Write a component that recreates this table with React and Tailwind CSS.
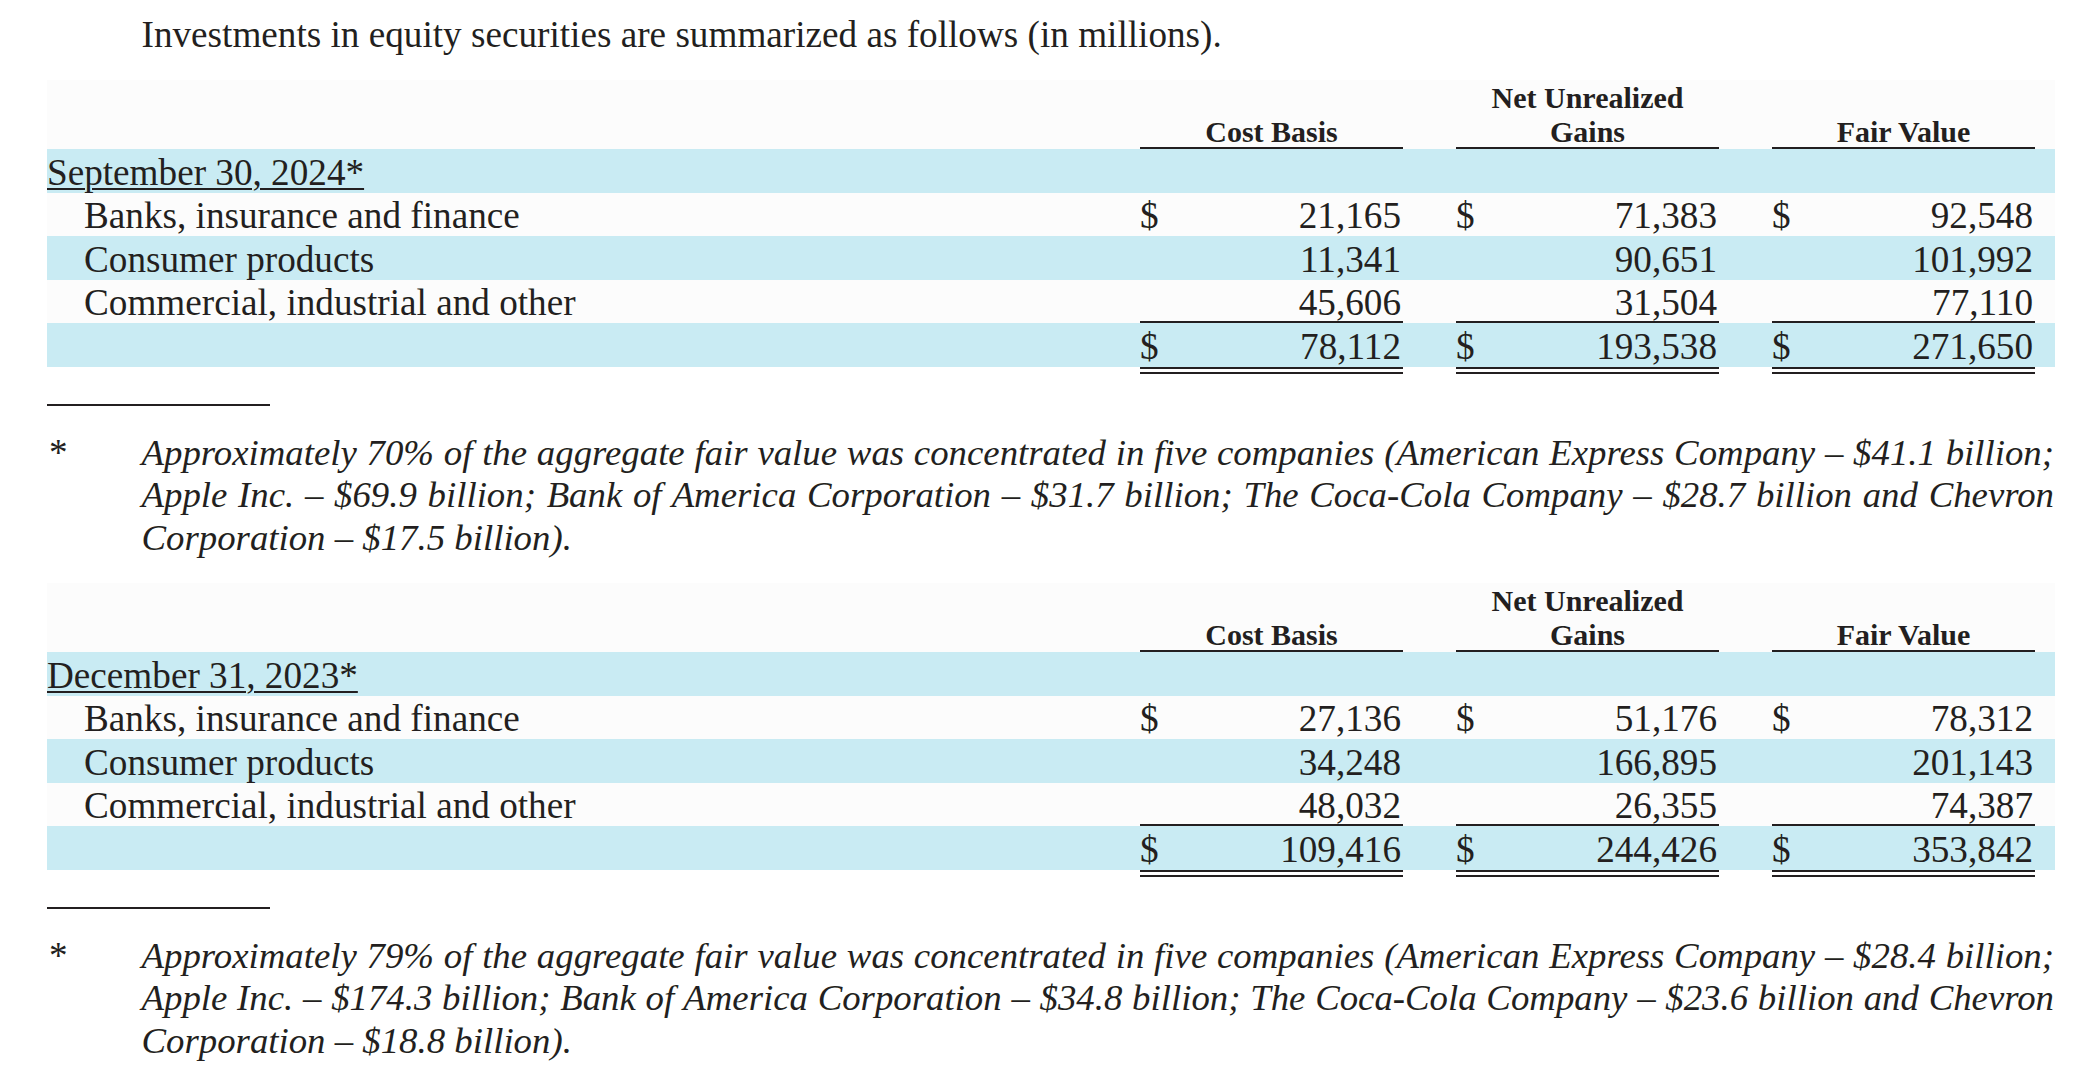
const ink = 'text-[#231f20]'

const sections = [
  {
    date: 'September 30, 2024*',
    rows: [
      ['Banks, insurance and finance', '21,165', '71,383', '92,548'],
      ['Consumer products', '11,341', '90,651', '101,992'],
      ['Commercial, industrial and other', '45,606', '31,504', '77,110'],
    ],
    total: ['78,112', '193,538', '271,650'],
    note: [
      'Approximately 70% of the aggregate fair value was concentrated in five companies (American Express Company – $41.1 billion;',
      'Apple Inc. – $69.9 billion; Bank of America Corporation – $31.7 billion; The Coca-Cola Company – $28.7 billion and Chevron',
      'Corporation – $17.5 billion).',
    ],
  },
  {
    date: 'December 31, 2023*',
    rows: [
      ['Banks, insurance and finance', '27,136', '51,176', '78,312'],
      ['Consumer products', '34,248', '166,895', '201,143'],
      ['Commercial, industrial and other', '48,032', '26,355', '74,387'],
    ],
    total: ['109,416', '244,426', '353,842'],
    note: [
      'Approximately 79% of the aggregate fair value was concentrated in five companies (American Express Company – $28.4 billion;',
      'Apple Inc. – $174.3 billion; Bank of America Corporation – $34.8 billion; The Coca-Cola Company – $23.6 billion and Chevron',
      'Corporation – $18.8 billion).',
    ],
  },
]

const headers = [['Cost Basis'], ['Net Unrealized', 'Gains'], ['Fair Value']]

function HeaderRow() {
  return (
    <div className="flex h-[69.3px] items-end pr-[20px]">
      <div className="flex-1" />
      {headers.map((lines, i) => (
        <div
          key={i}
          className={`w-[263px] border-b-2 border-[#231f20] ${i > 0 ? 'ml-[53px]' : ''}`}
        >
          <div className="mb-[-2.5px] text-center text-[30px] font-bold leading-[34.5px]">
            {lines.map((l) => (
              <div key={l}>{l}</div>
            ))}
          </div>
        </div>
      ))}
    </div>
  )
}

function Row({ label, values, band, dollars, indent, title, rule }) {
  return (
    <div className={`flex h-[43.5px] pr-[20px] pt-[2.5px] leading-[41px] ${band ? 'bg-[#c9ebf3]' : ''}`}>
      <div className={`flex-1 ${indent ? 'pl-[37px]' : ''}`}>
        {title ? (
          <span className="underline decoration-2 underline-offset-[3px]">{label}</span>
        ) : (
          label
        )}
      </div>
      {values.map((v, i) => (
        <div
          key={i}
          className={`flex w-[263px] justify-between ${i > 0 ? 'ml-[53px]' : ''} ${rule ? 'border-b-2 border-[#231f20]' : ''}`}
        >
          <span>{dollars ? '$' : ''}</span>
          <span className="pr-[2px]">{v}</span>
        </div>
      ))}
    </div>
  )
}

function Section({ data }) {
  return (
    <div>
      <div className="ml-[47px] w-[2008px] bg-[#fcfcfc]">
        <HeaderRow />
        <Row label={data.date} values={['', '', '']} band title />
        <Row label={data.rows[0][0]} values={data.rows[0].slice(1)} indent dollars />
        <Row label={data.rows[1][0]} values={data.rows[1].slice(1)} indent band />
        <Row label={data.rows[2][0]} values={data.rows[2].slice(1)} indent rule />
        <Row label="" values={data.total} band dollars />
      </div>
      <div className="ml-[47px] flex h-[7px] w-[2008px] pr-[20px]">
        <div className="flex-1" />
        <div className="w-[263px] border-b-[7px] border-double border-[#231f20]" />
        <div className="ml-[53px] w-[263px] border-b-[7px] border-double border-[#231f20]" />
        <div className="ml-[53px] w-[263px] border-b-[7px] border-double border-[#231f20]" />
      </div>
      <div className="ml-[47px] mt-[30px] h-[2px] w-[223px] bg-[#231f20]" />
      <div className="mt-[26.2px] flex leading-[42.5px]">
        <div className="w-[141.5px] pl-[49px]">*</div>
        <div className="w-[1912.5px] text-[36.8px] italic">
          {data.note.map((line, i) => (
            <div
              key={i}
              className={`whitespace-nowrap ${i < data.note.length - 1 ? 'text-justify [text-align-last:justify]' : ''}`}
            >
              {line}
            </div>
          ))}
        </div>
      </div>
    </div>
  )
}

export default function App() {
  return (
    <div className={`h-[1076px] w-[2074px] overflow-hidden bg-white text-[37.2px] [font-family:'Liberation_Serif','Times_New_Roman',serif] ${ink}`}>
      <p className="pl-[141.5px] pt-[14px] leading-[42.5px]">
        Investments in equity securities are summarized as follows (in millions).
      </p>
      <div className="mt-[23.5px] flex flex-col gap-[23.4px]">
        {sections.map((s) => (
          <Section key={s.date} data={s} />
        ))}
      </div>
    </div>
  )
}
